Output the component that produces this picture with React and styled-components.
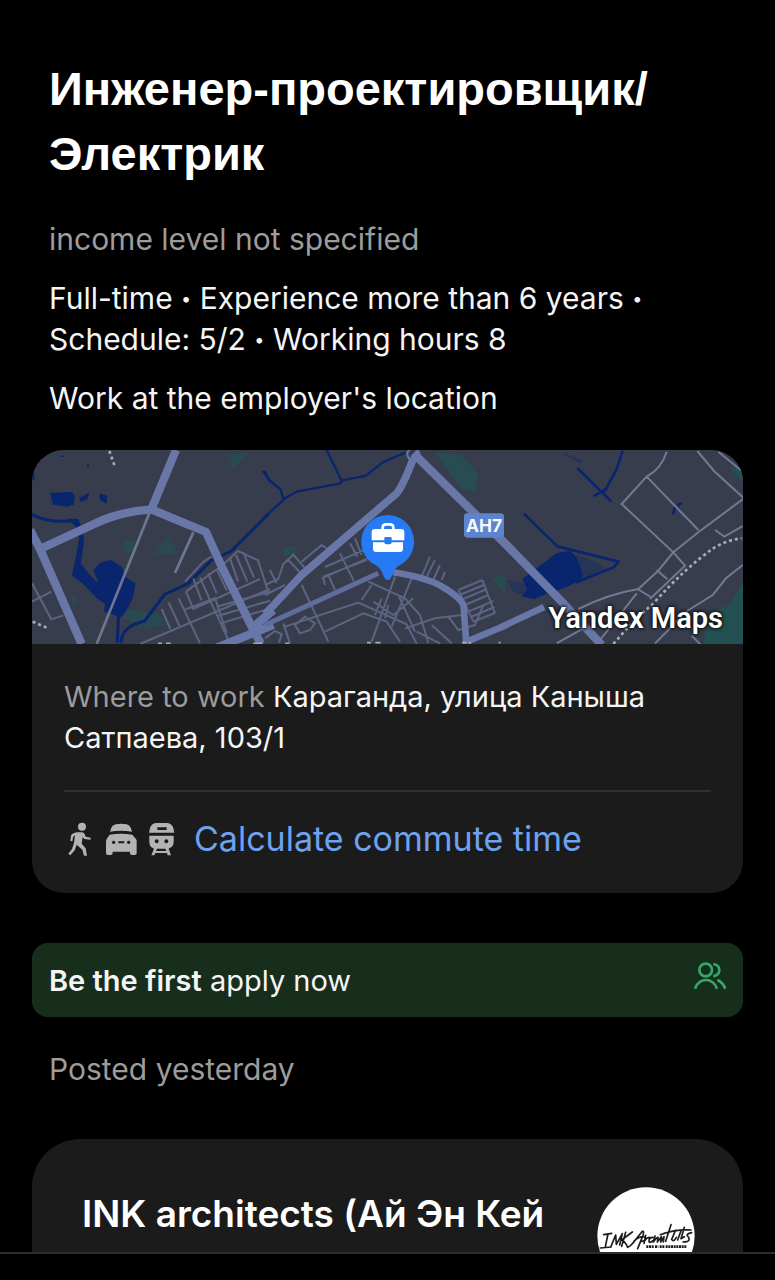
import React from 'react';
import styled, { createGlobalStyle } from 'styled-components';

const GlobalStyle = createGlobalStyle`
  * {
    box-sizing: border-box;
    margin: 0;
    padding: 0;
  }

  body {
    background-color: #000;
    color: #fff;
    font-family: Inter, 'Liberation Sans', sans-serif;
  }
`;

const Screen = styled.div`
  display: flex;
  flex-direction: column;
  height: 100vh;
`;

const Content = styled.main`
  flex: 1;
  min-height: 0;
  overflow: hidden;
  padding: 56px 32px 0;
`;

const BottomBar = styled.footer`
  flex: none;
  height: 28px;
  border-top: 2px solid #2b2b2b;
`;

const Summary = styled.section`
  display: flex;
  flex-direction: column;
  gap: 18px;
  padding: 0 17px;
`;

const Title = styled.h1`
  font-family: 'Liberation Sans', Arial, sans-serif;
  font-size: 47px;
  line-height: 65px;
  font-weight: 700;
  margin-bottom: 15px;
`;

const Text = styled.p`
  font-size: ${({ $small }) => ($small ? '29px' : '30px')};
  line-height: 41px;
  color: ${({ $muted }) => ($muted ? '#9c9c9c' : '#f5f5f5')};
`;

const Bullet = styled.span`
  font-size: 18px;
  vertical-align: 4px;
  line-height: 1;
`;

const LocationCard = styled.section`
  margin-top: 31px;
  border-radius: 32px;
  background-color: #1b1b1b;
  overflow: hidden;
`;

const MapBox = styled.div`
  position: relative;
  height: 194px;

  svg {
    display: block;
    width: 100%;
    height: 100%;
  }
`;

const MapBrand = styled.span`
  position: absolute;
  right: 20px;
  bottom: 8px;
  font-family: Roboto, sans-serif;
  font-size: 29px;
  line-height: 36px;
  font-weight: 600;
  text-shadow: 0 0 3px #111, 0 0 3px #111, 0 0 4px #111;
`;

const LocationBody = styled.div`
  padding: 32px;
`;

const Muted = styled.span`
  color: #9c9c9c;
`;

const Commute = styled.a`
  display: flex;
  align-items: center;
  gap: 18px;
  margin-top: 32px;
  padding-top: 24px;
  border-top: 2px solid #303030;
  color: #6ea2f0;
  font-size: 34px;
  line-height: 45px;
  text-decoration: none;
`;

const ApplyBanner = styled.button`
  display: flex;
  justify-content: space-between;
  align-items: center;
  width: 100%;
  height: 74px;
  margin-top: 50px;
  padding: 0 17px;
  border: 0;
  border-radius: 16px;
  background-color: #172e1d;
  color: #f5f5f5;
  font: inherit;
  font-size: 29px;
  cursor: pointer;

  strong {
    font-weight: 600;
  }

  svg {
    margin-bottom: 4px;
  }
`;

const Posted = styled(Text)`
  margin: 32px 17px 0;
`;

const CompanyCard = styled.section`
  display: flex;
  justify-content: space-between;
  align-items: flex-start;
  margin-top: 49px;
  padding: 48px 48px 32px 50px;
  border-radius: 48px;
  background-color: #1b1b1b;
`;

const CompanyName = styled.h2`
  font-size: 37px;
  line-height: 54px;
  font-weight: 600;
`;

const CityMap = () => (
  <svg viewBox="0 0 2133 582" preserveAspectRatio="xMidYMid slice" aria-hidden="true">
    <rect width="2133" height="582" fill="#373d4d" />

    {/* parks */}
    <g fill="#235052">
      <path d="M590 30l70-8-50 50zM280 285l40 5-8 38-30-8zM415 275l30 50-70 5 10-20zM280 490l110 20 20 30-60 10-70-30zM120 445l20 20-10 25z" transform="translate(-6 -15)" opacity=".7" />
      <path d="M510 22l80 8 50 60-10 50-40-8-40-55zM55 310l30-8 20 20-50 10zM680 400l40-10v60z" transform="translate(699 -15)" opacity=".8" />
      <path d="M730 410l-40 70-60 20-20 100h120zM690 70l40-10v50z" transform="translate(1404 -15)" />
    </g>

    {/* water */}
    <g fill="#08256e" stroke="#08256e" strokeLinecap="round" strokeLinejoin="round">
      <g transform="translate(-6 -15)">
        <path d="M62 145l64-2 6 10-2 24-18 6-42-6zM150 160l26-14-6 16-18 6zM210 148l20 6-2 20-16-10zM92 34h8M174 58v8" strokeWidth="4" />
        <path d="M112 222h32l6 14 12 50-6 40-4 30 26 32 20 22 8 0-16-34 20-22 32-9 34 22 8 28 32 20-8 44-20 40-16 18-50-18 4-22-26-18-42-44-32-24 14-62 8-50-10-34z" />
        <path d="M0 205q50 30 120 22M266 500l-4 90M274 590q0-45 70-62l60-80 70-32 70-70 60-28 110-110" fill="none" strokeWidth="9" />
        <path d="M10 85v18M700 80l20 30" strokeWidth="7" />
      </g>
      <g transform="translate(699 -15)" fill="none" strokeWidth="7">
        <path d="M0 215l60-55 35-20 128-24 10-10 70-14 50-40 65-28M185 15l45 92M0 80l12 24 35 30 8 28" />
      </g>
      <g transform="translate(1404 -15)">
        <path d="M110 370l60-45 40-8 20 20 14 40 4 25-50 25-60 20-36 15-36-8 14-20-12-32z" />
        <path d="M74 208l98 96 184 46-14 16-110 46M235 72l96 95M284 152l35-20M367 20l-18 55-36 65M520 205l5-18M535 180l8-4" fill="none" strokeWidth="8" />
        <path d="M20 405l50 10 10 40-40-15zM230 330l60 20 25 24-65 30zM195 25l55 22-10 8-45-25z" opacity=".35" strokeWidth="0" />
      </g>
    </g>

    {/* streets */}
    <g fill="none" stroke="#5d6482" strokeWidth="6">
      <g transform="translate(-6 -15)">
        <path d="M358 205L200 597M490 262l-55 122" strokeWidth="8" stroke="#6f7694" />
        <path d="M6 415l58 108 36-12M6 470l58-30M465 410l55-60 25-15M468 440l110-80M468 440l22 52 200-90M490 400l24 66M510 398l26 58M534 385l26 60M560 372l30 64M578 360l46-42 60 28 30 92M600 340l24 70M618 330l34 80M640 322l32 76M330 597l390-165M395 492l26 60M416 472l32 70M446 460l64 135M465 494l90-35 35 105M560 485l160-45M565 512l155-45M572 535l148-45M535 455l60 130" />
      </g>
      <g transform="translate(699 -15)">
        <path d="M0 420l40-18 15-45 30-28 38 44M70 345l40 42M110 350l60-50 18 12M15 375l20 40M110 420l80 170M170 400l150-65 M175 400l5 20 M180 366l120-52M225 325l42 84M255 295l22 40M270 280l20 50M175 395l130-50M190 390l20 45M0 450l60-30M60 545l220-72 145 65 30 58M180 560l115-55 70 25 40 60M90 540l30-25 30 20-15 20-30 10zM0 580l30-22 20 10-8 25M55 535l20 60M310 410l110 50 45 50 25 85M390 395l-70 195M290 465l30-45M440 400l-60 145M325 470l60 40 60-50M350 460l-20 50M370 480l-10 40M400 450l50 110M420 550l90-30 80-10M455 560l70 35M500 540l60 55M550 515l30 40 50-15 25-60M495 335l-25 60M510 345l-25 50M525 360l-20 45M540 380l-10 25" />
        <path d="M580 435l72-30M584 450l72-30M588 465l75-32M600 480l70-30M610 500l75-32M618 516l70-30M625 530l65-26M580 435l45 95M652 405l38 100" />
      </g>
      <g transform="translate(1404 -15)" stroke="#737994">
        <path d="M500 20q-15 50-60 75l-75 82 155 145 35 40-105 100M440 95l155 160M592 18l50 60 90 82-135 100-77 62-45 55-60 55q-90 15-180 60M470 375l32 28M410 430l42 26M655 20l75 62M645 255l28 20 55-32M728 360l-50 40-40 50-80 50-40 40M300 585l110-140M170 595l80-45M575 572l28 28M465 595l60-60" />
      </g>
    </g>

    {/* main roads */}
    <g fill="none" stroke="#6976a8" strokeLinejoin="round">
      <g transform="translate(-6 -15)" strokeWidth="25">
        <path d="M438 15l-74 178q-100 8-170 43L30 312M364 193l164 68 50 110 90 180 25 45M0 255l30 57 125 285" />
        <path d="M560 608l170-68" />
        <path d="M660 555l70-60" />
      </g>
      <g transform="translate(699 -15)">
        <path d="M0 508L110 390 395 145q20-25 50-105" strokeWidth="23" />
        <path d="M0 540L340 385" strokeWidth="15" stroke="#5f6d9e" />
        <path d="M385 382q100 16 145 42 60 35 66 60l8 115" strokeWidth="20" />
        <path d="M445 25l300 295" strokeWidth="25" />
        <path d="M605 590l120-50" strokeWidth="20" />
        <circle cx="445" cy="28" r="18" strokeWidth="6" />
      </g>
      <g transform="translate(1404 -15)">
        <path d="M0 280l185 190 120 130" strokeWidth="25" />
        <path d="M0 548l132-62" strokeWidth="20" />
      </g>
    </g>

    {/* railways */}
    <g fill="none" stroke="#a8abb3" strokeWidth="8" strokeDasharray="9 9">
      <path d="M238 18l18 50M8 530l42 18" transform="translate(-6 -15)" />
      <path d="M340 597q60-70 120-122 100-110 180-165 40-25 85-30" transform="translate(1404 -15)" />
    </g>

    {/* district labels cut by the lower edge */}
    <path d="M378 580h12M402 580h14M664 580h28M760 580h12M1005 578h12M1030 578h16M1290 578h14M1310 578h8M1400 578h6" stroke="#a5a9b6" strokeWidth="5" />

    <rect x="1296" y="190" width="120" height="73" rx="10" fill="#5d84cf" />
    <text x="1356" y="245" textAnchor="middle" fill="#f5f8ff" fontFamily="Inter" fontSize="52" fontWeight="700">AH7</text>

    {/* workplace pin */}
    <g transform="translate(699 -15)">
      <path d="M368 210a80 80 0 0 1 36 151q-15 8-22 28l-6 12q-8 8-16 0l-6-12q-7-20-22-28a80 80 0 0 1 36-151z" fill="#267bf5" />
      <path d="M353 254v-6q0-10 10-10h12q10 0 10 10v6" fill="none" stroke="#fff" strokeWidth="8" />
      <path d="M330 252h78q10 0 10 10v24h-38v-6q0-4-4-4h-14q-4 0-4 4v6h-38v-24q0-10 10-10zM324 292h34q0 6 6 6h10q6 0 6-6h34v20q0 9-9 9h-72q-9 0-9-9z" fill="#fff" />
    </g>
  </svg>
);

const CommuteIcons = () => (
  <svg width="112" height="36" viewBox="0 0 336 108" fill="#b3b3b3" aria-hidden="true">
    <g transform="translate(-41 -64)">
      <circle cx="95" cy="81" r="12" />
      <path d="M80 98h14q7 0 9 6l3 7 15 3v6l-19-2-5-6-3 20 12 14 4 22h-9l-5-18-17-15-6 17-13 15-6-5 11-14 6-18 3-24-6 7-2 12-6-1 2-16q4-8 18-10z" />
      <path d="M196 74q17-4 33 0 10 3 13 12l3 10q-33-5-66 0l4-12q3-8 13-10z" />
      <path d="M178 105q34-5 68 0l11 13q3 4 2 9v33q0 6-6 6h-8q-6 0-6-6v-4h-52v4q0 6-6 6h-8q-6 0-6-6v-33q0-5 2-9zM190 123a5 5 0 1 0 .1 0zM235 123a5 5 0 1 0 .1 0zM204 125v6h18v-6z" fillRule="evenodd" />
      <path d="M319 70h29q16 0 21 15l3 14h-76l3-14q5-15 20-15zM321 83v8h28v-8z" fillRule="evenodd" />
      <path d="M297 108h73v18q0 14-12 19l-3 2 7 20h-10l-2-7h-35l-3 7h-9l8-20-4-2q-10-5-10-19zM319 119a6 6 0 1 0 .1 0zM348 119a6 6 0 1 0 .1 0zM320 147l-3 7h31l-3-7z" fillRule="evenodd" />
    </g>
  </svg>
);

const PeopleIcon = () => (
  <svg width="32" height="32" viewBox="0 0 96 96" fill="none" stroke="#35a866" strokeWidth="8" aria-hidden="true">
    <circle cx="35" cy="24" r="19" />
    <path d="M58 6q18 3 18 18t-18 19M3 80q10-26 33-26t33 26M70 54q16 6 24 26" />
  </svg>
);

const CompanyLogo = () => (
  <svg width="98" height="98" viewBox="0 0 294 294" role="img" aria-label="INK Architects">
    <circle cx="147" cy="147" r="146" fill="#fff" />
    <g transform="translate(-110 -169)" fill="none" stroke="#1b1b1b" strokeWidth="5" strokeLinecap="round" strokeLinejoin="round">
      <path d="M130 312l24-4M143 310l-8 38M120 352l32-3M152 347l14-34 2 28 18-32-8 34M196 305l-12 42M216 304l-32 24q12 6 18 22 10-4 26-26l18-22q6-2 2 12l-16 40M222 330q24-18 32-10t-10 12" />
      <path d="M256 314l-5 24q2-16 16-18M278 320q-12 0-12 10t12 0M284 316l-5 18q10-14 14-14l-2 14 12-16-2 16 10-16-2 16M332 282l-16 50M300 312q40-16 92-14M346 298l-12 28q6 10 14-6M362 300l-10 28M372 290l-10 34 10-6M394 306q-18 4-12 10t4 12-18 6" />
      <path d="M258 348h22M284 348h10M298 348h14M316 348h62" strokeWidth="8" strokeDasharray="6 2" strokeLinecap="butt" />
    </g>
  </svg>
);

const App = () => {
  return (
    <Screen>
      <GlobalStyle />
      <Content>
        <Summary>
          <Title>Инженер-проектировщик/<wbr />Электрик</Title>
          <Text $muted>income level not specified</Text>
          <Text>
            Full-time <Bullet>•</Bullet> Experience more than 6 years <Bullet>•</Bullet> Schedule: 5/2 <Bullet>•</Bullet> Working hours 8
          </Text>
          <Text>Work at the employer's location</Text>
        </Summary>

        <LocationCard>
          <MapBox>
            <CityMap />
            <MapBrand>Yandex Maps</MapBrand>
          </MapBox>
          <LocationBody>
            <Text $small>
              <Muted>Where to work</Muted> Караганда, улица Каныша Сатпаева, 103/1
            </Text>
            <Commute href="#commute">
              <CommuteIcons />
              Calculate commute time
            </Commute>
          </LocationBody>
        </LocationCard>

        <ApplyBanner type="button">
          <span><strong>Be the first</strong> apply now</span>
          <PeopleIcon />
        </ApplyBanner>

        <Posted $muted>Posted yesterday</Posted>

        <CompanyCard>
          <CompanyName>INK architects (Ай Эн Кей</CompanyName>
          <CompanyLogo />
        </CompanyCard>
      </Content>
      <BottomBar />
    </Screen>
  );
};

export default App;
